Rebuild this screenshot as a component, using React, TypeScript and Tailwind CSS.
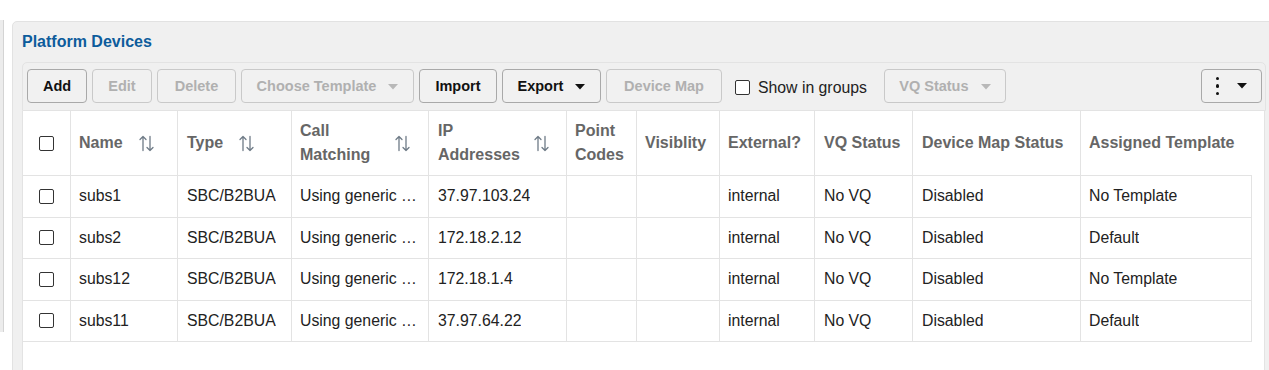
import React from "react";

const SortIcon = () => (
  <svg width="15" height="17" viewBox="0 0 15 17" fill="none" stroke="#6f7b87" strokeWidth="1.3" strokeLinecap="round" strokeLinejoin="round">
    <path d="M4 15.5V1.5M1 4.5L4 1.5L7 4.5" />
    <path d="M11 1.5V15.5M8 12.5L11 15.5L14 12.5" />
  </svg>
);

const Caret = ({ color }: { color: string }) => (
  <svg width="10" height="6" viewBox="0 0 10 6">
    <path d="M0 0H10L5 5.5Z" fill={color} />
  </svg>
);

const Check = () => (
  <span className="inline-block h-[15px] w-[15px] rounded-[2px] border-[1.5px] border-[#333] bg-white" />
);

const Btn = ({
  w,
  disabled,
  children,
}: {
  w: string;
  disabled?: boolean;
  children: React.ReactNode;
}) => (
  <div
    className={`${w} flex h-[34px] shrink-0 items-center justify-center rounded-[4px] border bg-[#f1f1f1] pt-[1px] text-[14.5px] font-bold ${
      disabled ? "border-[#c9c9c9] text-[#b0b0b0]" : "border-[#a9a9a9] text-[#111]"
    }`}
  >
    {children}
  </div>
);

const rows = [
  ["subs1", "SBC/B2BUA", "Using generic matching", "37.97.103.24", "", "", "internal", "No VQ", "Disabled", "No Template"],
  ["subs2", "SBC/B2BUA", "Using generic matching", "172.18.2.12", "", "", "internal", "No VQ", "Disabled", "Default"],
  ["subs12", "SBC/B2BUA", "Using generic matching", "172.18.1.4", "", "", "internal", "No VQ", "Disabled", "No Template"],
  ["subs11", "SBC/B2BUA", "Using generic matching", "37.97.64.22", "", "", "internal", "No VQ", "Disabled", "Default"],
];

const widths = ["w-[107px]", "w-[114px]", "w-[137px]", "w-[138px]", "w-[70px]", "w-[83px]", "w-[95px]", "w-[98px]", "w-[168px]", "w-[171px]"];

export default function App() {
  return (
    <div className="relative h-[370px] w-[1269px] overflow-hidden bg-white font-['Liberation_Sans',Arial,sans-serif]">
      <div className="flex items-start">
        <div className="mt-[20px] h-[312px] w-[4px] shrink-0 border-r border-[#d4d4d4] bg-[#ececec]" />
        <div className="ml-[8px] mt-[21px] h-[400px] w-[1280px] shrink-0 rounded-[5px] border border-[#e2e2e2] bg-[#f0f0f0] pl-[9px] pt-[10px]">
          <div className="h-[20px] text-[16px] font-bold leading-[20px] text-[#0d5c9c]">Platform Devices</div>
          <div className="mt-[10px] w-[1244px]">
            {/* toolbar */}
            <div className="flex h-[49px] items-start justify-between rounded-t-[5px] border border-[#e3e3e3] bg-[#f0f0f0] pl-[4px] pr-[3px] pt-[6px]">
              <div className="flex items-center gap-[5px]">
                <Btn w="w-[60px]">Add</Btn>
                <Btn w="w-[60px]" disabled>Edit</Btn>
                <Btn w="w-[79px]" disabled>Delete</Btn>
                <Btn w="w-[173px]" disabled>
                  <span>Choose Template</span>
                  <span className="ml-[12px] flex"><Caret color="#b8b8b8" /></span>
                </Btn>
                <Btn w="w-[78px]">Import</Btn>
                <Btn w="w-[99px]">
                  <span>Export</span>
                  <span className="ml-[12px] flex"><Caret color="#111" /></span>
                </Btn>
                <Btn w="w-[116px]" disabled>Device Map</Btn>
                <div className="ml-[8px] flex items-center pt-[3px]">
                  <Check />
                  <span className="ml-[8px] text-[15.8px] text-[#222]">Show in groups</span>
                </div>
                <div className="ml-[12px]">
                  <Btn w="w-[122px]" disabled>
                    <span>VQ Status</span>
                    <span className="ml-[12px] flex"><Caret color="#b8b8b8" /></span>
                  </Btn>
                </div>
              </div>
              <div className="flex h-[34px] w-[61px] items-center justify-center rounded-[4px] border border-[#a9a9a9] bg-[#f1f1f1]">
                <span className="flex flex-col gap-[4px]">
                  <span className="h-[3.5px] w-[3.5px] rounded-full bg-[#111]" />
                  <span className="h-[3.5px] w-[3.5px] rounded-full bg-[#111]" />
                  <span className="h-[3.5px] w-[3.5px] rounded-full bg-[#111]" />
                </span>
                <span className="ml-[18px] flex"><Caret color="#111" /></span>
              </div>
            </div>
            {/* table */}
            <div className="h-[300px] w-[1243px] border-x border-[#e3e3e3] bg-white">
              {/* header */}
              <div className="flex h-[64px] text-[16px] font-bold leading-[24px] text-[#666]">
                <div className="flex w-[47px] items-center justify-center">
                  <Check />
                </div>
                <div className={`${widths[0]} flex items-center border-l border-[#e3e3e3] pl-[8px]`}>
                  <span>Name</span>
                  <span className="ml-[16px] flex"><SortIcon /></span>
                </div>
                <div className={`${widths[1]} flex items-center border-l border-[#e3e3e3] pl-[9px]`}>
                  <span>Type</span>
                  <span className="ml-[16px] flex"><SortIcon /></span>
                </div>
                <div className={`${widths[2]} flex items-center border-l border-[#e3e3e3] pl-[8px]`}>
                  <span className="w-[80px]">Call Matching</span>
                  <span className="ml-[15px] flex"><SortIcon /></span>
                </div>
                <div className={`${widths[3]} flex items-center border-l border-[#e3e3e3] pl-[9px]`}>
                  <span className="w-[81px]">IP Addresses</span>
                  <span className="ml-[15px] flex"><SortIcon /></span>
                </div>
                <div className={`${widths[4]} flex items-center border-l border-[#e3e3e3] pl-[8px]`}>
                  <span className="w-[50px]">Point Codes</span>
                </div>
                <div className={`${widths[5]} flex items-center border-l border-[#e3e3e3] pl-[8px]`}>Visiblity</div>
                <div className={`${widths[6]} flex items-center border-l border-[#e3e3e3] pl-[8px]`}>External?</div>
                <div className={`${widths[7]} flex items-center border-l border-[#e3e3e3] pl-[9px]`}>VQ Status</div>
                <div className={`${widths[8]} flex items-center border-l border-[#e3e3e3] pl-[9px]`}>Device Map Status</div>
                <div className={`${widths[9]} flex items-center border-l border-[#e3e3e3] pl-[8px]`}>Assigned Template</div>
              </div>
              {/* body */}
              <div className="w-[1229px] border-b border-[#e3e3e3] text-[15.8px] text-[#222]">
                {rows.map((r, i) => (
                  <div key={i} className="flex h-[41.5px] border-t border-r border-[#e3e3e3]">
                    <div className="flex w-[47px] items-center justify-center">
                      <Check />
                    </div>
                    {r.map((c, j) => (
                      <div
                        key={j}
                        className={`${widths[j]} flex items-center overflow-hidden border-l border-[#e3e3e3] ${
                          j === 1 || j === 3 || j === 7 || j === 8 ? "pl-[9px]" : "pl-[8px]"
                        } pr-[9px]`}
                      >
                        <span className="truncate">{c}</span>
                      </div>
                    ))}
                  </div>
                ))}
              </div>
            </div>
          </div>
        </div>
      </div>
    </div>
  );
}
